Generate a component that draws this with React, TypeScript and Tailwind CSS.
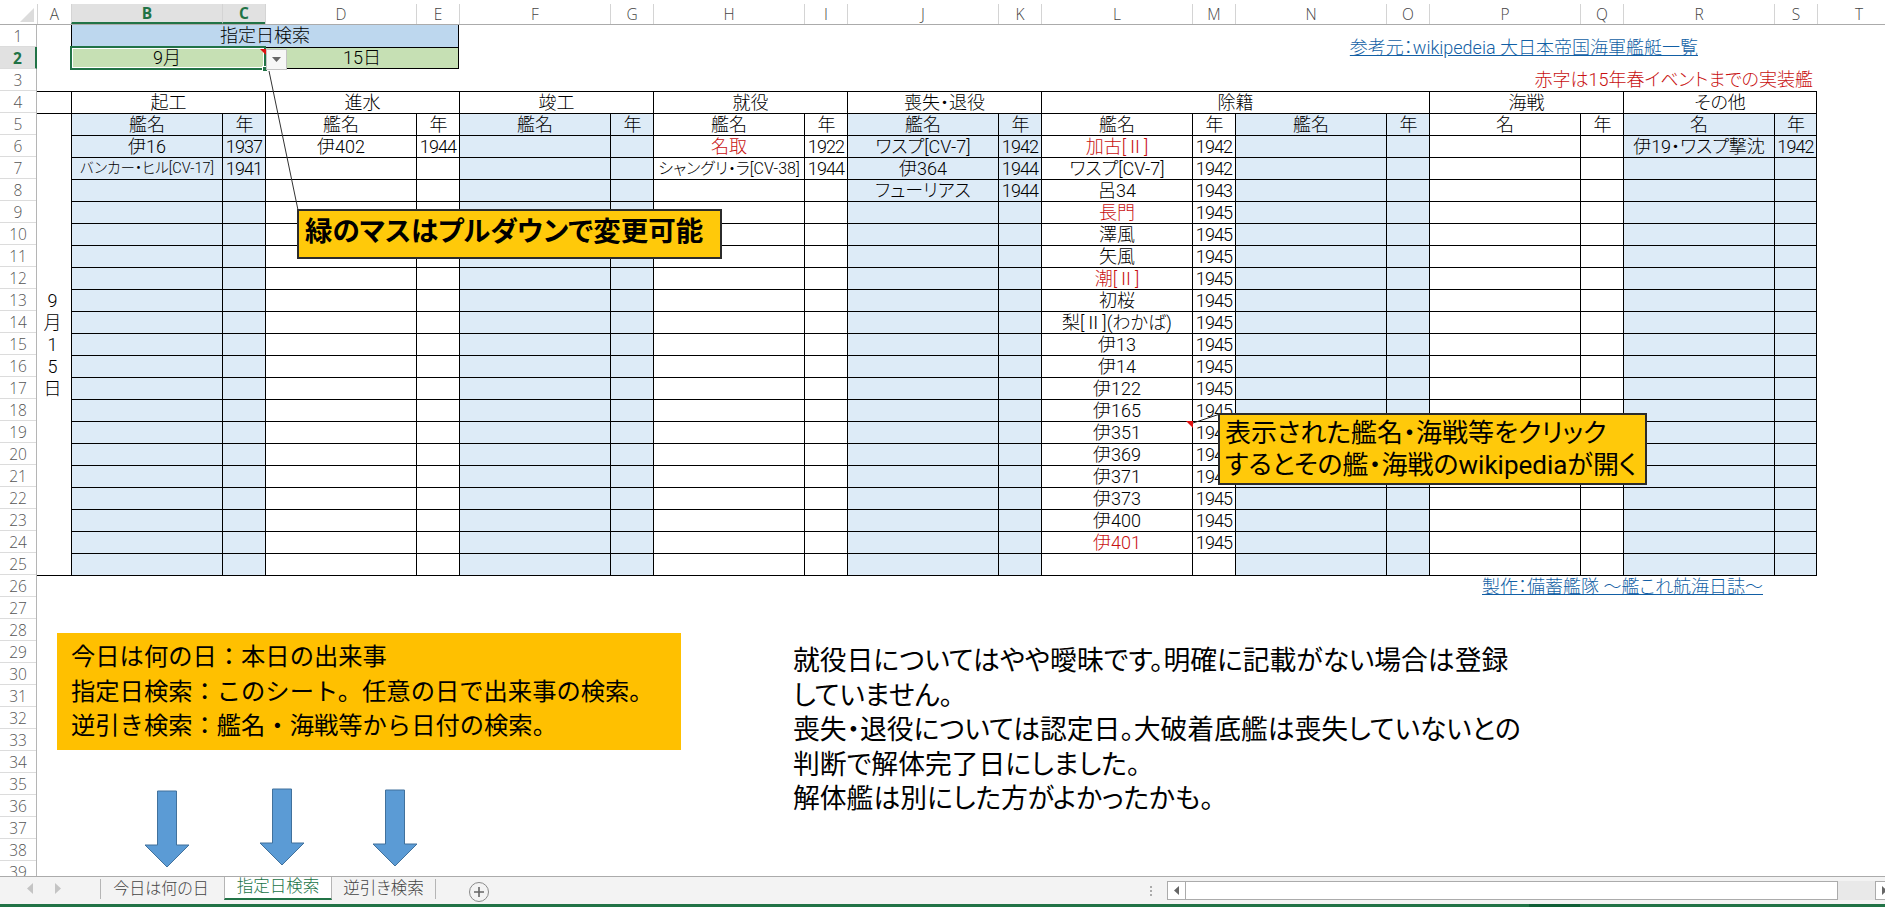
import clsx from "clsx";

type Entry = { name: string; year: string; red?: boolean; fit?: "tight" | "loose" };
type Pair = { head: string; data: Entry[] };

const columnLabels = "ABCDEFGHIJKLMNOPQRST".split("");
const rowNumbers = Array.from({ length: 39 }, (_, i) => i + 1);

const groups = [
  { label: "起工", wide: false },
  { label: "進水", wide: false },
  { label: "竣工", wide: false },
  { label: "就役", wide: false },
  { label: "喪失・退役", wide: false },
  { label: "除籍", wide: true },
  { label: "海戦", wide: false },
  { label: "その他", wide: false },
];

const pairs: Pair[] = [
  {
    head: "艦名",
    data: [
      { name: "伊16", year: "1937" },
      { name: "バンカー・ヒル[CV-17]", year: "1941", fit: "tight" },
    ],
  },
  { head: "艦名", data: [{ name: "伊402", year: "1944" }] },
  { head: "艦名", data: [] },
  {
    head: "艦名",
    data: [
      { name: "名取", year: "1922", red: true },
      { name: "シャングリ・ラ[CV-38]", year: "1944", fit: "loose" },
    ],
  },
  {
    head: "艦名",
    data: [
      { name: "ワスプ[CV-7]", year: "1942" },
      { name: "伊364", year: "1944" },
      { name: "フューリアス", year: "1944" },
    ],
  },
  {
    head: "艦名",
    data: [
      { name: "加古[Ⅱ]", year: "1942", red: true },
      { name: "ワスプ[CV-7]", year: "1942" },
      { name: "呂34", year: "1943" },
      { name: "長門", year: "1945", red: true },
      { name: "澤風", year: "1945" },
      { name: "矢風", year: "1945" },
      { name: "潮[Ⅱ]", year: "1945", red: true },
      { name: "初桜", year: "1945" },
      { name: "梨[Ⅱ](わかば)", year: "1945" },
      { name: "伊13", year: "1945" },
      { name: "伊14", year: "1945" },
      { name: "伊122", year: "1945" },
      { name: "伊165", year: "1945" },
      { name: "伊351", year: "1945" },
      { name: "伊369", year: "1945" },
      { name: "伊371", year: "1945" },
      { name: "伊373", year: "1945" },
      { name: "伊400", year: "1945" },
      { name: "伊401", year: "1945", red: true },
    ],
  },
  { head: "艦名", data: [] },
  { head: "名", data: [] },
  { head: "名", data: [{ name: "伊19・ワスプ撃沈", year: "1942" }] },
];

const dataRows = Array.from({ length: 20 }, (_, i) => i);

function Cell({
  children,
  blue,
  red,
  fit,
  year,
  last,
}: {
  children?: React.ReactNode;
  blue?: boolean;
  red?: boolean;
  fit?: "tight" | "loose";
  year?: boolean;
  last?: boolean;
}) {
  return (
    <div
      className={clsx(
        "flex items-center justify-center overflow-hidden whitespace-nowrap border-l border-t border-black",
        blue && "bg-[#ddebf7]",
        red && "text-[#c81010]",
        fit === "tight" && "text-[14.5px]",
        fit === "loose" && "text-[16px]",
        year && "tracking-[-0.9px]",
        last && "border-r",
      )}
    >
      {children}
    </div>
  );
}

function ColumnHeaders() {
  return (
    <div className="grid h-[25px] shrink-0 grid-cols-[37px_34px_repeat(9,151px_43px)_83px] overflow-hidden border-b border-[#ababab] pt-[4px] font-['Open_Sans',sans-serif] text-[15.5px] leading-[18px] text-[#444]">
      <div className="relative -mt-[4px]">
        <svg className="absolute left-0 top-0" width="37" height="25">
          <polygon points="20,22 34,22 34,8" fill="#dcdcdc" />
        </svg>
      </div>
      {columnLabels.map((label) => {
        const selected = label === "B" || label === "C";
        return (
          <div
            key={label}
            className={clsx(
              "flex items-center justify-center border-l border-[#d4d4d4]",
              selected && "border-b-2 border-b-[#217346] bg-[#e1e1e1] font-bold text-[#217346]",
            )}
          >
            {label}
          </div>
        );
      })}
    </div>
  );
}

function RowHeaders() {
  return (
    <div className="flex w-[37px] shrink-0 flex-col border-r border-[#b5b5b5] font-['Open_Sans',sans-serif] text-[15.5px] leading-[18px] text-[#555]">
      {rowNumbers.map((n) => (
        <div
          key={n}
          className={clsx(
            "flex h-[22px] shrink-0 items-center justify-center border-b border-[#dcdcdc]",
            n === 2 && "-mr-px border-r-2 border-r-[#217346] bg-[#e1e1e1] font-bold text-[#217346]",
          )}
        >
          {n}
        </div>
      ))}
    </div>
  );
}

function SheetGrid() {
  return (
    <div className="grid w-fit auto-rows-[22px] grid-cols-[34px_repeat(9,151px_43px)] text-[18px] leading-[22px] text-black">
      {/* rows 1-3: search box */}
      <div />
      <div className="col-span-4 flex items-center justify-center border-x border-black bg-[#bdd7ee]">指定日検索</div>
      <div className="col-span-14 row-span-2 flex items-center justify-end pt-[2px] pr-[119px] text-[#125fa5] underline">
        参考元：wikipedeia 大日本帝国海軍艦艇一覧
      </div>
      <div />
      <div className="relative col-span-2 flex items-center justify-center bg-[#c6e0b4]">
        <div className="absolute -inset-x-px -inset-y-px border-2 border-[#217346] shadow-[inset_0_0_0_1px_white]" />
        <span className="relative pr-[2px]">9月</span>
        <div className="absolute -bottom-[3px] -right-[3px] h-[6px] w-[6px] border border-white bg-[#217346]" />
      </div>
      <div className="col-span-2 flex items-center justify-center border-x border-b border-t border-black bg-[#c6e0b4]">15日</div>
      <div className="col-span-full flex items-center justify-end pr-[4px] text-[#c81010]">赤字は15年春イベントまでの実装艦</div>

      {/* row 4: group headings */}
      <div className="border-t border-black" />
      {groups.map((g, i) => (
        <div
          key={g.label}
          className={clsx(
            "flex items-center justify-center border-l border-t border-black",
            g.wide ? "col-span-4" : "col-span-2",
            i === groups.length - 1 && "border-r",
          )}
        >
          {g.label}
        </div>
      ))}

      {/* row 5 */}
      <div className="row-span-21 flex flex-col items-center justify-center border-t border-black pr-[3px]">
        <span>9</span>
        <span>月</span>
        <span>1</span>
        <span>5</span>
        <span>日</span>
      </div>
      {pairs.map((p, i) => (
        <PairCells key={i} index={i} name={p.head} year="年" />
      ))}

      {/* rows 6-25 */}
      {dataRows.map((r) =>
        pairs.map((p, i) => (
          <PairCells key={`${r}-${i}`} index={i} name={p.data[r]?.name} year={p.data[r]?.year} red={p.data[r]?.red} fit={p.data[r]?.fit} />
        )),
      )}

      {/* row 26 */}
      <div className="col-span-full flex items-center justify-end border-t border-black pr-[54px] text-[#125fa5] underline">
        製作：備蓄艦隊 ～艦これ航海日誌～
      </div>
    </div>
  );
}

function PairCells({
  index,
  name,
  year,
  red,
  fit,
}: {
  index: number;
  name?: string;
  year?: string;
  red?: boolean;
  fit?: "tight" | "loose";
}) {
  const blue = index % 2 === 0;
  return (
    <>
      <Cell blue={blue} red={red} fit={fit}>
        {name}
      </Cell>
      <Cell blue={blue} year last={index === pairs.length - 1}>
        {year}
      </Cell>
    </>
  );
}

function DownArrow({ className }: { className: string }) {
  return (
    <svg className={className} width="46" height="78" viewBox="0 0 46 78">
      <polygon points="13.5,1 32.5,1 32.5,55 45,55 23,77 1,55 13.5,55" fill="#5b9bd5" stroke="#41719c" strokeWidth="1" />
    </svg>
  );
}

function NoteArea() {
  return (
    <div className="flex">
      <div className="ml-[20px] w-[624px]">
        <div className="mt-[36px] h-[117px] bg-[#ffc000] pl-[14px] pt-[7px] text-[24.3px] font-normal leading-[34.5px] text-black [font-feature-settings:normal]">
          <p>今日は何の日：本日の出来事</p>
          <p>指定日検索：このシート。任意の日で出来事の検索。</p>
          <p>逆引き検索：艦名・海戦等から日付の検索。</p>
        </div>
        <div className="ml-[87px] mt-[38px] flex gap-[68px]">
          <DownArrow className="mt-[2px]" />
          <DownArrow className="ml-px mt-0" />
          <DownArrow className="-ml-px mt-[1px]" />
        </div>
      </div>
      <div className="ml-[112px] mt-[47px] text-[26.8px] font-normal leading-[34.6px] text-black">
        <p>就役日についてはやや曖昧です。明確に記載がない場合は登録</p>
        <p>していません。</p>
        <p>喪失・退役については認定日。大破着底艦は喪失していないとの</p>
        <p>判断で解体完了日にしました。</p>
        <p>解体艦は別にした方がよかったかも。</p>
      </div>
    </div>
  );
}

function TabBar() {
  return (
    <div className="flex h-[28px] shrink-0 items-start overflow-hidden border-t border-[#ababab] bg-[#f3f3f3] text-[16px] text-[#444]">
      <div className="flex h-[23px] w-[100px] shrink-0 items-center">
        <svg className="ml-[27px]" width="6" height="11">
          <polygon points="6,0 0,5.5 6,11" fill="#c4c4c4" />
        </svg>
        <svg className="ml-[22px]" width="6" height="11">
          <polygon points="0,0 6,5.5 0,11" fill="#c4c4c4" />
        </svg>
      </div>
      <div className="mt-[2px] flex h-[20px] w-[124px] shrink-0 items-center justify-center border-l border-[#b5b5b5] pr-[3px]">今日は何の日</div>
      <div className="-mt-px flex h-[24px] w-[108px] shrink-0 items-center justify-center border-x border-b-[2px] border-[#b5b5b5] border-b-[#217346] bg-white text-[16.5px] text-[#217346]">
        指定日検索
      </div>
      <div className="mt-[2px] flex h-[20px] w-[104px] shrink-0 items-center justify-center border-r border-[#b5b5b5] text-[16.5px]">逆引き検索</div>
      <div className="ml-[33px] mt-[5px] flex h-[20px] w-[20px] shrink-0 items-center justify-center rounded-full border border-[#8a8a8a] text-[#666]">
        <svg width="10" height="10">
          <path d="M5 0v10M0 5h10" stroke="#666" strokeWidth="1.6" />
        </svg>
      </div>
      <div className="ml-[661px] mt-[9px] flex h-[10px] w-[2px] shrink-0 flex-col justify-between">
        <span className="h-[2px] bg-[#aaa]" />
        <span className="h-[2px] bg-[#aaa]" />
        <span className="h-[2px] bg-[#aaa]" />
      </div>
      <div className="ml-[15px] mt-[4px] flex h-[19px] shrink-0">
        <div className="flex w-[19px] items-center justify-center border border-[#ababab] bg-white">
          <svg width="5" height="9">
            <polygon points="5,0 0,4.5 5,9" fill="#666" />
          </svg>
        </div>
        <div className="-ml-px w-[653px] border border-[#ababab] bg-white" />
        <div className="w-[37px] bg-[#e9e9e9]" />
        <div className="flex w-[19px] items-center justify-center border border-[#ababab] bg-white">
          <svg width="5" height="9">
            <polygon points="0,0 5,4.5 0,9" fill="#666" />
          </svg>
        </div>
      </div>
    </div>
  );
}

function Callouts() {
  return (
    <>
      <svg className="pointer-events-none absolute left-0 top-0" width="1885" height="907">
        <line x1="269" y1="71" x2="298" y2="210" stroke="#333" strokeWidth="1" />
        <line x1="1220" y1="414" x2="1190" y2="424" stroke="#222" strokeWidth="1" />
        <polygon points="1186,421 1193,421 1193,428" fill="#e01010" />
        <polygon points="260,49 266,49 266,55" fill="#e01010" />
      </svg>
      <div className="absolute left-[266px] top-[49px] flex h-[21px] w-[21px] items-center justify-center border border-[#c4c4c4] bg-[#f7f7f7]">
        <svg width="9" height="5">
          <polygon points="0,0 9,0 4.5,5" fill="#666" />
        </svg>
      </div>
      <div className="absolute left-[297px] top-[209px] flex h-[50px] w-[425px] items-center border-2 border-[#2b2b2b] bg-[#ffc90a] pb-[5px] pl-[6px] text-[27.5px] font-bold leading-[34px] text-black">
        緑のマスはプルダウンで変更可能
      </div>
      <div className="absolute left-[1218px] top-[413px] h-[72px] w-[429px] border-2 border-[#2b2b2b] bg-[#ffc90a] pl-[5px] pt-[2px] text-[26px] font-normal leading-[32px] text-black">
        <p>表示された艦名・海戦等をクリック</p>
        <p>するとその艦・海戦のwikipediaが開く</p>
      </div>
    </>
  );
}

export default function App() {
  return (
    <div className="relative flex h-[907px] w-[1885px] flex-col overflow-hidden bg-white font-['Roboto','Noto_Sans_CJK_JP',sans-serif] font-light [font-feature-settings:'palt']">
      <ColumnHeaders />
      <div className="flex min-h-0 flex-1 overflow-hidden">
        <RowHeaders />
        <div className="min-w-0 flex-1">
          <SheetGrid />
          <NoteArea />
        </div>
      </div>
      <TabBar />
      <div className="h-[3px] shrink-0 bg-[#217346]">
        <div className="ml-[1529px] h-full w-[51px] bg-[#0f5f36]" />
      </div>
      <Callouts />
    </div>
  );
}
